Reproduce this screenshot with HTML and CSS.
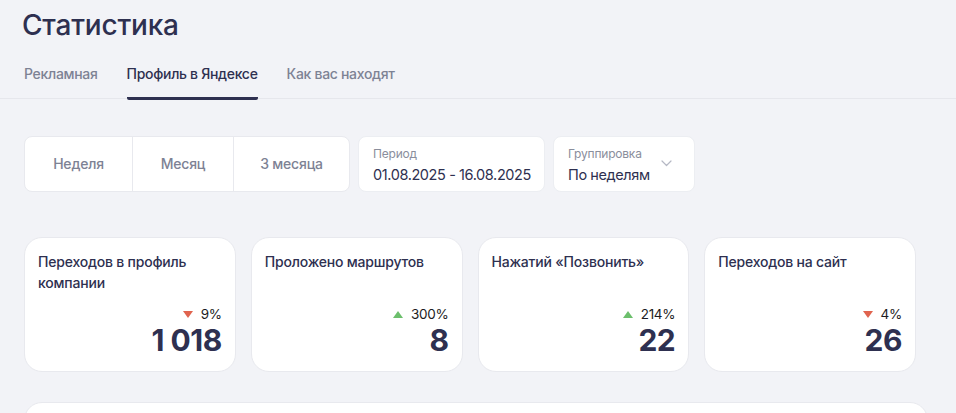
FILE: index.html
```html
<!DOCTYPE html>
<html lang="ru">
<head>
	<meta charset="utf-8" />
	<meta name="viewport" content="width=device-width, initial-scale=1.0" />
	<title>Статистика</title>
	<link rel="stylesheet" href="styles.css">
</head>
<body>
	<header class="page-head">
		<h1>Статистика</h1>
		<nav class="tabs">
			<a href="#/ads" class="tab">Рекламная</a>
			<a href="#/profile" class="tab tab--active">Профиль в Яндексе</a>
			<a href="#/search" class="tab">Как вас находят</a>
		</nav>
	</header>

	<main class="content">
		<div class="filters">
			<div class="segments">
				<button class="segment">Неделя</button>
				<button class="segment">Месяц</button>
				<button class="segment">3 месяца</button>
			</div>
			<div class="field field--period">
				<span class="field__label">Период</span>
				<span class="field__value">01.08.2025 - 16.08.2025</span>
			</div>
			<div class="field field--select">
				<div class="field__body">
					<span class="field__label">Группировка</span>
					<span class="field__value">По неделям</span>
				</div>
				<svg class="chevron" width="11" height="7" viewBox="0 0 11 7"><path d="M1 1l4.5 4.5L10 1" fill="none" stroke="#b5b8c4" stroke-width="1.2" stroke-linecap="round" stroke-linejoin="round"/></svg>
			</div>
		</div>

		<div class="cards">
			<div class="card">
				<div class="card__title">Переходов в профиль компании</div>
				<div class="card__change"><span class="tri tri--down"></span>9%</div>
				<div class="card__value">1 018</div>
			</div>
			<div class="card">
				<div class="card__title">Проложено маршрутов</div>
				<div class="card__change"><span class="tri tri--up"></span>300%</div>
				<div class="card__value">8</div>
			</div>
			<div class="card">
				<div class="card__title">Нажатий «Позвонить»</div>
				<div class="card__change"><span class="tri tri--up"></span>214%</div>
				<div class="card__value">22</div>
			</div>
			<div class="card">
				<div class="card__title">Переходов на сайт</div>
				<div class="card__change"><span class="tri tri--down"></span>4%</div>
				<div class="card__value">26</div>
			</div>
		</div>

		<section class="panel"></section>
	</main>
</body>
</html>
```

FILE: styles.css
```css
body {
	font-family: Inter, "Noto Sans", sans-serif;
	color: #2e3050;
	background: #f2f3f7;
	margin: 0;
	overflow: hidden;
}
.page-head {
	padding: 0 22px;
	border-bottom: 1px solid #e6e7ec;
}
h1 {
	font-size: 28px;
	font-weight: 500;
	line-height: 36px;
	margin: 0;
	padding-top: 7px;
	letter-spacing: -0.2px;
}
.tabs {
	display: flex;
	gap: 29px;
	margin-top: 21px;
	padding-left: 2px;
}
.tab {
	font-size: 14px;
	font-weight: 500;
	line-height: 20px;
	color: #7d8294;
	text-decoration: none;
	padding-bottom: 13px;
	border-bottom: 3px solid transparent;
	border-radius: 2px;
	margin-bottom: -2px;
	letter-spacing: -0.3px;
}
.tab--active {
	color: #2e3050;
	border-bottom-color: #2e3050;
}

.content {
	padding: 37px 24px 0;
}
.filters {
	display: flex;
	gap: 8px;
}
.segments {
	display: flex;
	background: #fff;
	border: 1px solid #e8e9ee;
	border-radius: 8px;
	height: 54px;
}
.segment {
	font: 500 14px/20px Inter, "Noto Sans", sans-serif;
	color: #7d8294;
	background: none;
	border: 0;
	border-left: 1px solid #e8e9ee;
	letter-spacing: -0.2px;
}
.segment:first-child { border-left: 0; width: 107px; }
.segment:nth-child(2) { width: 101px; }
.segment:nth-child(3) { width: 116px; }

.field {
	background: #fff;
	border: 1px solid #eceef2;
	border-radius: 8px;
	height: 54px;
	box-sizing: content-box;
	display: flex;
	flex-direction: column;
	justify-content: center;
	padding: 0 14px;
	white-space: nowrap;
}
.field--period { width: 157px; }
.field--select {
	flex-direction: row;
	align-items: center;
	justify-content: space-between;
	width: 104px;
	padding-right: 22px;
}
.field__body {
	display: flex;
	flex-direction: column;
}
.field__label {
	font-size: 12px;
	line-height: 16px;
	color: #8a8e9c;
	margin-top: 2px;
	letter-spacing: -0.2px;
}
.field__value {
	font-size: 14.5px;
	line-height: 20px;
	color: #2e3050;
	margin-top: 3px;
	letter-spacing: -0.4px;
}
.chevron { margin-top: -2px; }

.cards {
	display: flex;
	gap: 15px;
	width: 892px;
	margin-top: 45px;
}
.card {
	flex: 1;
	height: 135px;
	box-sizing: border-box;
	background: #fff;
	border: 1px solid #e8e9ee;
	border-radius: 18px;
	padding: 13px 13px 14px 13px;
	display: flex;
	flex-direction: column;
}
.card__title {
	font-size: 14px;
	font-weight: 500;
	line-height: 21px;
	color: #2e3050;
	max-width: 170px;
	flex: 1;
	letter-spacing: -0.2px;
}
.card__change {
	align-self: flex-end;
	display: flex;
	align-items: center;
	gap: 8px;
	font-size: 13.5px;
	line-height: 18px;
	color: #1c1c22;
	letter-spacing: -0.3px;
}
.tri {
	width: 0;
	height: 0;
	border-left: 5px solid transparent;
	border-right: 5px solid transparent;
}
.tri--down { border-top: 7px solid #e0644f; }
.tri--up { border-bottom: 7px solid #6cbf6c; }
.card__value {
	align-self: flex-end;
	font-size: 30px;
	font-weight: 700;
	line-height: 34px;
	color: #2e3050;
	letter-spacing: -0.5px;
}

.panel {
	margin-top: 30px;
	width: 904px;
	height: 60px;
	background: #fff;
	border: 1px solid #e8e9ee;
	border-radius: 18px;
	box-sizing: border-box;
}
```
